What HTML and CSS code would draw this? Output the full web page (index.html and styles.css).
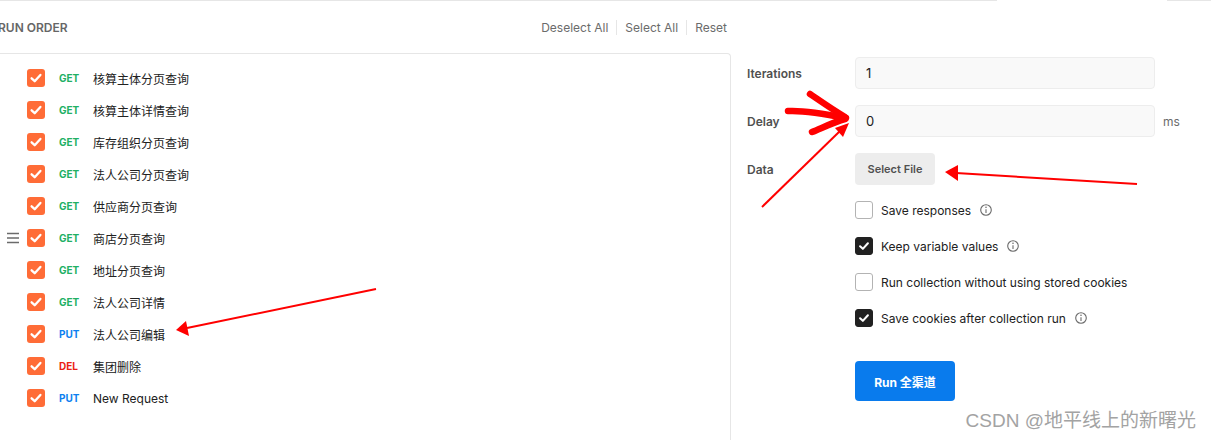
FILE: index.html
```html
<!DOCTYPE html>
<html lang="zh-CN">
<head>
<meta charset="utf-8">
<title>Collection Runner</title>
<link rel="stylesheet" href="styles.css">
</head>
<body>
<div class="page">
  <div class="topline"><span class="tl-a"></span><span class="tl-b"></span></div>
  <div class="runner">
    <section class="order">
      <header class="order-head">
        <h2 class="order-title">RUN ORDER</h2>
        <nav class="order-actions">
          <a class="act">Deselect All</a>
          <span class="sep"></span>
          <a class="act">Select All</a>
          <span class="sep"></span>
          <a class="act">Reset</a>
        </nav>
      </header>
      <ul class="order-list">
        <li class="req"><span class="handle"></span><span class="cb on"><svg viewBox="0 0 18 18"><path d="M4.6 9.3 L7.7 12.2 L13.4 5.9"/></svg></span><span class="method get">GET</span><span class="name">核算主体分页查询</span></li>
        <li class="req"><span class="handle"></span><span class="cb on"><svg viewBox="0 0 18 18"><path d="M4.6 9.3 L7.7 12.2 L13.4 5.9"/></svg></span><span class="method get">GET</span><span class="name">核算主体详情查询</span></li>
        <li class="req"><span class="handle"></span><span class="cb on"><svg viewBox="0 0 18 18"><path d="M4.6 9.3 L7.7 12.2 L13.4 5.9"/></svg></span><span class="method get">GET</span><span class="name">库存组织分页查询</span></li>
        <li class="req"><span class="handle"></span><span class="cb on"><svg viewBox="0 0 18 18"><path d="M4.6 9.3 L7.7 12.2 L13.4 5.9"/></svg></span><span class="method get">GET</span><span class="name">法人公司分页查询</span></li>
        <li class="req"><span class="handle"></span><span class="cb on"><svg viewBox="0 0 18 18"><path d="M4.6 9.3 L7.7 12.2 L13.4 5.9"/></svg></span><span class="method get">GET</span><span class="name">供应商分页查询</span></li>
        <li class="req"><span class="handle"><svg viewBox="0 0 12 12"><path d="M0 1.5 H12 M0 6 H12 M0 10.5 H12"/></svg></span><span class="cb on"><svg viewBox="0 0 18 18"><path d="M4.6 9.3 L7.7 12.2 L13.4 5.9"/></svg></span><span class="method get">GET</span><span class="name">商店分页查询</span></li>
        <li class="req"><span class="handle"></span><span class="cb on"><svg viewBox="0 0 18 18"><path d="M4.6 9.3 L7.7 12.2 L13.4 5.9"/></svg></span><span class="method get">GET</span><span class="name">地址分页查询</span></li>
        <li class="req"><span class="handle"></span><span class="cb on"><svg viewBox="0 0 18 18"><path d="M4.6 9.3 L7.7 12.2 L13.4 5.9"/></svg></span><span class="method get">GET</span><span class="name">法人公司详情</span></li>
        <li class="req"><span class="handle"></span><span class="cb on"><svg viewBox="0 0 18 18"><path d="M4.6 9.3 L7.7 12.2 L13.4 5.9"/></svg></span><span class="method put">PUT</span><span class="name">法人公司编辑</span></li>
        <li class="req"><span class="handle"></span><span class="cb on"><svg viewBox="0 0 18 18"><path d="M4.6 9.3 L7.7 12.2 L13.4 5.9"/></svg></span><span class="method del">DEL</span><span class="name">集团删除</span></li>
        <li class="req"><span class="handle"></span><span class="cb on"><svg viewBox="0 0 18 18"><path d="M4.6 9.3 L7.7 12.2 L13.4 5.9"/></svg></span><span class="method put">PUT</span><span class="name">New Request</span></li>
      </ul>
    </section>

    <section class="settings">
      <div class="form">
        <label class="flabel">Iterations</label>
        <input class="field" type="text" value="1">
        <span class="unit"></span>

        <label class="flabel">Delay</label>
        <input class="field" type="text" value="0">
        <span class="unit">ms</span>

        <label class="flabel">Data</label>
        <div class="file-cell"><button class="file-btn">Select File</button></div>
        <span class="unit"></span>
      </div>

      <div class="options">
        <div class="opt"><span class="ocb"></span><span class="olabel">Save responses</span><svg class="info" viewBox="0 0 12 12"><circle cx="6" cy="6" r="5.3"/><path d="M6 5.2 V9"/><circle class="dot" cx="6" cy="3.3" r="0.8"/></svg></div>
        <div class="opt"><span class="ocb on"><svg viewBox="0 0 18 18"><path d="M4.6 9.3 L7.7 12.2 L13.4 5.9"/></svg></span><span class="olabel">Keep variable values</span><svg class="info" viewBox="0 0 12 12"><circle cx="6" cy="6" r="5.3"/><path d="M6 5.2 V9"/><circle class="dot" cx="6" cy="3.3" r="0.8"/></svg></div>
        <div class="opt"><span class="ocb"></span><span class="olabel">Run collection without using stored cookies</span></div>
        <div class="opt"><span class="ocb on"><svg viewBox="0 0 18 18"><path d="M4.6 9.3 L7.7 12.2 L13.4 5.9"/></svg></span><span class="olabel">Save cookies after collection run</span><svg class="info" viewBox="0 0 12 12"><circle cx="6" cy="6" r="5.3"/><path d="M6 5.2 V9"/><circle class="dot" cx="6" cy="3.3" r="0.8"/></svg></div>
      </div>

      <button class="run-btn">Run 全渠道</button>
    </section>
  </div>

  <svg class="annot" viewBox="0 0 1211 440">
    <g class="thick">
      <path d="M810 94 C 816 98, 830 108, 845 117"/>
      <path d="M788 111 C 805 110, 826 114, 846 118"/>
      <path d="M812 132 C 822 128, 834 122, 845 119"/>
    </g>
    <g class="thin">
      <path d="M762 207 L840 131"/>
      <path d="M1137 184 L956 173"/>
      <path d="M376 289 L187 328"/>
    </g>
    <g class="head">
      <polygon points="849,123 843,137 835,128"/>
      <polygon points="945,172 958,165 958,181"/>
      <polygon points="176,330 186,321 189,336"/>
    </g>
  </svg>

  <div class="watermark">CSDN @地平线上的新曙光</div>
</div>
</body>
</html>
```

FILE: styles.css
```css
* { box-sizing: border-box; }

html, body {
  margin: 0;
  padding: 0;
  background: #ffffff;
}

body {
  font-family: Inter, "Noto Sans CJK SC", "Noto Sans", sans-serif;
  color: #212121;
}

.page {
  position: relative;
  width: 1211px;
  height: 440px;
  overflow: hidden;
}

.topline {
  display: flex;
  height: 1px;
}
.tl-a { width: 997px; background: #e6e6e6; }
.tl-b { width: 44px; margin-left: auto; background: #e6e6e6; }

.runner {
  display: flex;
  height: 439px;
}

/* ---------- left: run order ---------- */
.order {
  flex: none;
  width: 731px;
  display: flex;
  flex-direction: column;
}

.order-head {
  height: 52px;
  display: flex;
  align-items: center;
  justify-content: space-between;
  padding-right: 4px;
}

.order-title {
  margin: 0 0 0 -2px;
  font-size: 12px;
  font-weight: 600;
  color: #666666;
  letter-spacing: 0;
}

.order-actions {
  display: flex;
  align-items: center;
}
.act {
  font-size: 12px;
  color: #6b6b6b;
  padding: 0 8px;
}
.act:last-child { padding-right: 0; }
.sep {
  width: 1px;
  height: 15px;
  background: #e6e6e6;
}

.order-list {
  flex: 1;
  list-style: none;
  margin: 0;
  padding: 8px 0 0 0;
  border-top: 1px solid #e6e6e6;
  border-right: 1px solid #e6e6e6;
  border-top-right-radius: 4px;
}

.req {
  height: 32px;
  display: flex;
  align-items: center;
}

.handle {
  width: 27px;
  height: 12px;
  padding-left: 7px;
  display: flex;
}
.handle svg {
  width: 12px;
  height: 12px;
  fill: none;
  stroke: #6b6b6b;
  stroke-width: 1.4;
}

.cb {
  width: 18px;
  height: 18px;
  border-radius: 3px;
  display: flex;
}
.cb.on { background: #ff6c37; }
.cb svg, .ocb svg {
  width: 18px;
  height: 18px;
  fill: none;
  stroke: #ffffff;
  stroke-width: 2.3;
  stroke-linecap: round;
  stroke-linejoin: round;
}

.method {
  margin-left: 14px;
  width: 34px;
  font-size: 10px;
  font-weight: 700;
}
.method.get { color: #21b064; }
.method.put { color: #0d7ff0; }
.method.del { color: #eb2013; }

.name {
  font-size: 12px;
  color: #212121;
}

/* ---------- right: settings ---------- */
.settings {
  flex: 1;
  padding: 56px 0 0 16px;
  display: flex;
  flex-direction: column;
}

.form {
  display: grid;
  grid-template-columns: 108px 300px auto;
  grid-auto-rows: 32px;
  row-gap: 16px;
  align-items: center;
}

.flabel {
  font-size: 12px;
  font-weight: 600;
  color: #505050;
}

.field {
  width: 300px;
  height: 32px;
  margin: 0;
  padding: 0 10px;
  font-family: inherit;
  font-size: 13px;
  color: #212121;
  background: #f9f9f9;
  border: 1px solid #ededed;
  border-radius: 4px;
  outline: none;
}

.unit {
  padding-left: 8px;
  font-size: 12px;
  color: #6b6b6b;
}

.file-cell { display: flex; height: 32px; }
.file-btn {
  width: 80px;
  height: 32px;
  margin: 0;
  padding: 0;
  border: none;
  border-radius: 4px;
  background: #ededed;
  font-family: inherit;
  font-size: 11px;
  font-weight: 600;
  color: #505050;
}

.options {
  margin: 16px 0 0 108px;
  display: flex;
  flex-direction: column;
  gap: 18px;
}

.opt {
  height: 18px;
  display: flex;
  align-items: center;
}

.ocb {
  flex: none;
  width: 18px;
  height: 18px;
  border: 1px solid #b3b3b3;
  border-radius: 3px;
  display: flex;
  align-items: center;
  justify-content: center;
}
.ocb.on {
  background: #212121;
  border-color: #212121;
}
.ocb.on svg { width: 16px; height: 16px; }

.olabel {
  margin-left: 8px;
  font-size: 12px;
  color: #212121;
}

.info {
  margin-left: 9px;
  width: 12px;
  height: 12px;
  fill: none;
  stroke: #6b6b6b;
  stroke-width: 1.1;
}
.info .dot { fill: #6b6b6b; stroke: none; }

.run-btn {
  margin: 34px 0 0 108px;
  width: 100px;
  height: 40px;
  padding: 0;
  border: none;
  border-radius: 4px;
  background: #097bed;
  color: #ffffff;
  font-family: inherit;
  font-size: 12px;
  font-weight: 700;
}

/* ---------- overlays ---------- */
.annot {
  position: absolute;
  left: 0;
  top: 0;
  width: 1211px;
  height: 440px;
  pointer-events: none;
}
.annot .thick path {
  fill: none;
  stroke: #ff0000;
  stroke-width: 6.5;
  stroke-linecap: round;
}
.annot .thin path {
  fill: none;
  stroke: #ff0000;
  stroke-width: 2;
}
.annot .head polygon { fill: #ff0000; }

.watermark {
  position: absolute;
  right: 15px;
  top: 408px;
  font-family: "Liberation Sans", "Noto Sans CJK SC", sans-serif;
  font-size: 19px;
  line-height: 26px;
  color: #a3a3a3;
  text-shadow: 0 0 1px rgba(255,255,255,0.8);
}
```
